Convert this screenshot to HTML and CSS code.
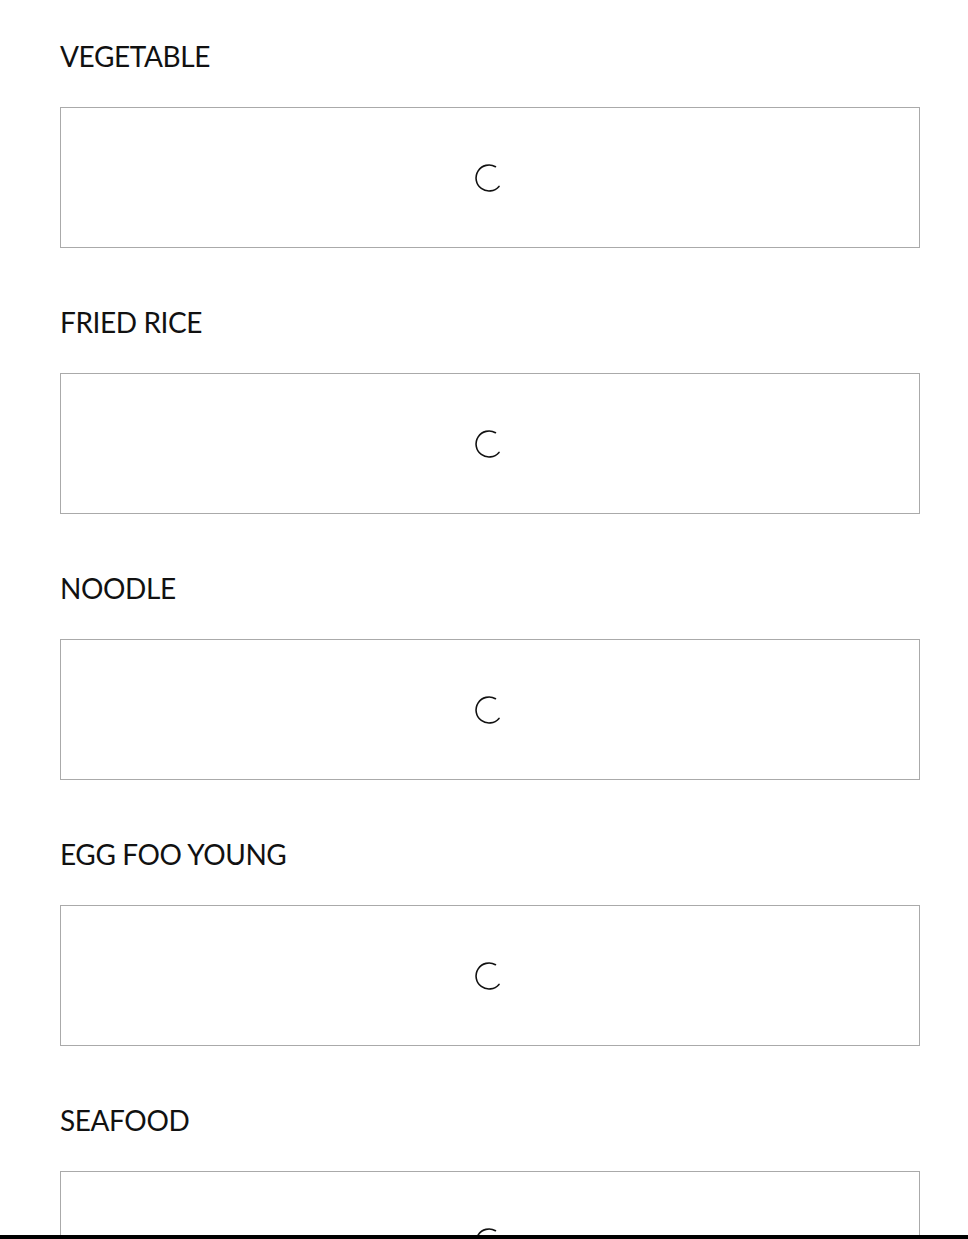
FILE: index.html
```html
<!DOCTYPE html>
<html lang="en">
<head>
<meta charset="utf-8">
<title>Menu</title>
<link rel="stylesheet" href="styles.css">
</head>
<body>
<main class="menu">
  <section class="category">
    <h2 class="category-title">VEGETABLE</h2>
    <div class="loader-box">
      <svg class="spinner" width="30" height="30" viewBox="0 0 30 30"><path d="M21.5 3.7 A13 13 0 1 0 25 23.4" fill="none" stroke="#111" stroke-width="1.6" stroke-linecap="round"/></svg>
    </div>
  </section>
  <section class="category">
    <h2 class="category-title">FRIED RICE</h2>
    <div class="loader-box">
      <svg class="spinner" width="30" height="30" viewBox="0 0 30 30"><path d="M21.5 3.7 A13 13 0 1 0 25 23.4" fill="none" stroke="#111" stroke-width="1.6" stroke-linecap="round"/></svg>
    </div>
  </section>
  <section class="category">
    <h2 class="category-title">NOODLE</h2>
    <div class="loader-box">
      <svg class="spinner" width="30" height="30" viewBox="0 0 30 30"><path d="M21.5 3.7 A13 13 0 1 0 25 23.4" fill="none" stroke="#111" stroke-width="1.6" stroke-linecap="round"/></svg>
    </div>
  </section>
  <section class="category">
    <h2 class="category-title">EGG FOO YOUNG</h2>
    <div class="loader-box">
      <svg class="spinner" width="30" height="30" viewBox="0 0 30 30"><path d="M21.5 3.7 A13 13 0 1 0 25 23.4" fill="none" stroke="#111" stroke-width="1.6" stroke-linecap="round"/></svg>
    </div>
  </section>
  <section class="category">
    <h2 class="category-title">SEAFOOD</h2>
    <div class="loader-box">
      <svg class="spinner" width="30" height="30" viewBox="0 0 30 30"><path d="M21.5 3.7 A13 13 0 1 0 25 23.4" fill="none" stroke="#111" stroke-width="1.6" stroke-linecap="round"/></svg>
    </div>
  </section>
</main>
<div class="bottom-bar"></div>
</body>
</html>
```
FILE: styles.css
```css
* { box-sizing: border-box; }
html, body { margin: 0; padding: 0; background: #fff; }
body {
  font-family: "Lato", "Liberation Sans", sans-serif;
  color: #111;
}
.menu {
  padding: 39px 48px 0 60px;
  display: flex;
  flex-direction: column;
  gap: 57px;
}
.category {
  display: flex;
  flex-direction: column;
}
.category-title {
  margin: 0 0 34px;
  font-size: 28px;
  line-height: 34px;
  font-weight: 400;
  letter-spacing: -0.4px;
  color: #111;
}
.loader-box {
  height: 141px;
  border: 1px solid #aaa;
  display: flex;
  align-items: center;
  justify-content: center;
}
.spinner { display: block; margin-left: -3px; }
.bottom-bar {
  position: fixed;
  left: 0;
  right: 0;
  bottom: 0;
  height: 4px;
  background: #000;
}
```
